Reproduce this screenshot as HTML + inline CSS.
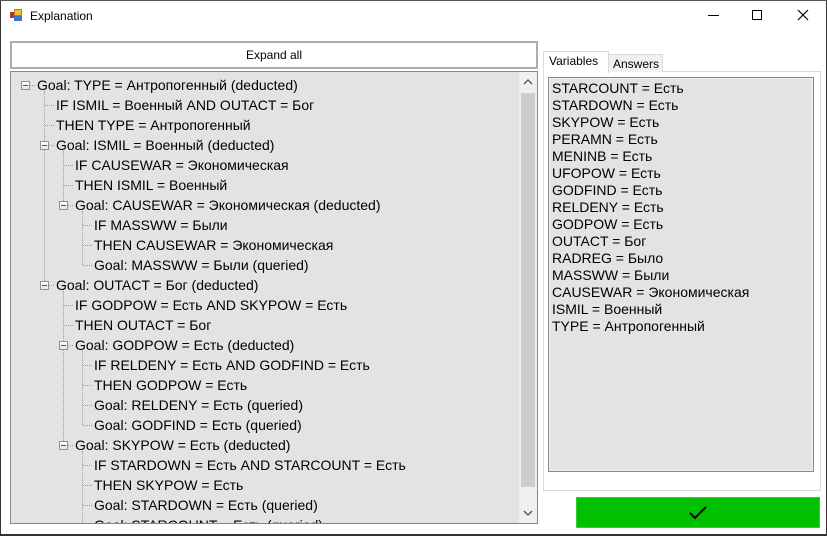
<!DOCTYPE html>
<html><head><meta charset="utf-8"><style>
*{margin:0;padding:0;box-sizing:border-box}
body{width:827px;height:536px;background:#fff;position:relative;overflow:hidden;font-family:"Liberation Sans",Arial,sans-serif;font-size:13px;color:#000}
.abs{position:absolute}
.t{position:absolute;white-space:nowrap;line-height:20px;height:20px}
.tr .t{font-size:14px}
.vl{position:absolute;width:1px;border-left:1px dotted #a0a0a0}
.hl{position:absolute;height:1px;border-top:1px dotted #a0a0a0}
.box{position:absolute;width:9px;height:9px;border:1px solid #919191;background:linear-gradient(#fff,#e6e6e6)}
.box:after{content:"";position:absolute;left:1px;top:3px;width:5px;height:1px;background:#3c50a0}
.lb{position:absolute;left:552px;white-space:nowrap;line-height:17px;font-size:14px}
</style></head><body>
<div class="abs" style="left:0;top:0;width:1px;height:536px;background:#333"></div>
<div class="abs" style="left:826px;top:0;width:1px;height:536px;background:#333"></div>
<div class="abs" style="left:0;top:534px;width:827px;height:2px;background:#333"></div>
<div class="abs" style="left:0;top:0;width:827px;height:1px;background:#555"></div>
<div class="abs" style="left:10px;top:9px;width:12px;height:12px">
<div class="abs" style="left:0;top:3px;width:5px;height:6px;background:#c03030"></div>
<div class="abs" style="left:4px;top:0;width:8px;height:7px;background:#f0c030;border:1px solid #b08020"></div>
<div class="abs" style="left:4px;top:7px;width:8px;height:5px;background:#4070d0"></div>
</div>
<div class="t" style="left:30px;top:6px;font-size:12px">Explanation</div>
<div class="abs" style="left:708px;top:15px;width:11px;height:1px;background:#000"></div>
<div class="abs" style="left:752px;top:10px;width:10px;height:10px;border:1px solid #000"></div>
<svg class="abs" style="left:797px;top:9px" width="12" height="12"><path d="M1 1L11 11M11 1L1 11" stroke="#000" stroke-width="1.2"/></svg>
<div class="abs" style="left:10px;top:41px;width:528px;height:28px;border:2px solid #adadad;background:#fff"></div>
<div class="t" style="left:10px;top:45px;width:528px;text-align:center;font-size:12px">Expand all</div>
<div class="abs tr" style="left:10px;top:71px;width:528px;height:453px;border:1px solid #828790;background:#e3e3e3;overflow:hidden">
<div class="abs" style="left:508px;top:0;width:18px;height:451px;background:#f0f0f0"></div>
<div class="abs" style="left:510px;top:21px;width:14px;height:394px;background:#cdcdcd"></div>
<svg class="abs" style="left:512px;top:6px" width="10" height="8"><path d="M1 6L5 2L9 6" fill="none" stroke="#606060" stroke-width="1.5"/></svg>
<svg class="abs" style="left:512px;top:437px" width="10" height="8"><path d="M1 2L5 6L9 2" fill="none" stroke="#606060" stroke-width="1.5"/></svg>
<div style="position:absolute;left:-10px;top:-71px">
<div class="vl" style="left:43px;top:90px;height:194px"></div>
<div class="vl" style="left:62px;top:150px;height:54px"></div>
<div class="vl" style="left:81px;top:210px;height:54px"></div>
<div class="vl" style="left:62px;top:290px;height:154px"></div>
<div class="vl" style="left:81px;top:350px;height:74px"></div>
<div class="vl" style="left:81px;top:450px;height:80px"></div>
<div class="hl" style="left:29px;top:84px;width:5px"></div>
<div class="hl" style="left:44px;top:104px;width:9px"></div>
<div class="hl" style="left:44px;top:124px;width:9px"></div>
<div class="hl" style="left:48px;top:144px;width:5px"></div>
<div class="hl" style="left:63px;top:164px;width:9px"></div>
<div class="hl" style="left:63px;top:184px;width:9px"></div>
<div class="hl" style="left:67px;top:204px;width:5px"></div>
<div class="hl" style="left:82px;top:224px;width:9px"></div>
<div class="hl" style="left:82px;top:244px;width:9px"></div>
<div class="hl" style="left:82px;top:264px;width:9px"></div>
<div class="hl" style="left:48px;top:284px;width:5px"></div>
<div class="hl" style="left:63px;top:304px;width:9px"></div>
<div class="hl" style="left:63px;top:324px;width:9px"></div>
<div class="hl" style="left:67px;top:344px;width:5px"></div>
<div class="hl" style="left:82px;top:364px;width:9px"></div>
<div class="hl" style="left:82px;top:384px;width:9px"></div>
<div class="hl" style="left:82px;top:404px;width:9px"></div>
<div class="hl" style="left:82px;top:424px;width:9px"></div>
<div class="hl" style="left:67px;top:444px;width:5px"></div>
<div class="hl" style="left:82px;top:464px;width:9px"></div>
<div class="hl" style="left:82px;top:484px;width:9px"></div>
<div class="hl" style="left:82px;top:504px;width:9px"></div>
<div class="hl" style="left:82px;top:524px;width:9px"></div>
<div class="box" style="left:20px;top:80px"></div>
<div class="box" style="left:39px;top:140px"></div>
<div class="box" style="left:58px;top:200px"></div>
<div class="box" style="left:39px;top:280px"></div>
<div class="box" style="left:58px;top:340px"></div>
<div class="box" style="left:58px;top:440px"></div>
<div class="t" style="left:36px;top:74px">Goal: TYPE = Антропогенный (deducted)</div>
<div class="t" style="left:55px;top:94px">IF ISMIL = Военный AND OUTACT = Бог</div>
<div class="t" style="left:55px;top:114px">THEN TYPE = Антропогенный</div>
<div class="t" style="left:55px;top:134px">Goal: ISMIL = Военный (deducted)</div>
<div class="t" style="left:74px;top:154px">IF CAUSEWAR = Экономическая</div>
<div class="t" style="left:74px;top:174px">THEN ISMIL = Военный</div>
<div class="t" style="left:74px;top:194px">Goal: CAUSEWAR = Экономическая (deducted)</div>
<div class="t" style="left:93px;top:214px">IF MASSWW = Были</div>
<div class="t" style="left:93px;top:234px">THEN CAUSEWAR = Экономическая</div>
<div class="t" style="left:93px;top:254px">Goal: MASSWW = Были (queried)</div>
<div class="t" style="left:55px;top:274px">Goal: OUTACT = Бог (deducted)</div>
<div class="t" style="left:74px;top:294px">IF GODPOW = Есть AND SKYPOW = Есть</div>
<div class="t" style="left:74px;top:314px">THEN OUTACT = Бог</div>
<div class="t" style="left:74px;top:334px">Goal: GODPOW = Есть (deducted)</div>
<div class="t" style="left:93px;top:354px">IF RELDENY = Есть AND GODFIND = Есть</div>
<div class="t" style="left:93px;top:374px">THEN GODPOW = Есть</div>
<div class="t" style="left:93px;top:394px">Goal: RELDENY = Есть (queried)</div>
<div class="t" style="left:93px;top:414px">Goal: GODFIND = Есть (queried)</div>
<div class="t" style="left:74px;top:434px">Goal: SKYPOW = Есть (deducted)</div>
<div class="t" style="left:93px;top:454px">IF STARDOWN = Есть AND STARCOUNT = Есть</div>
<div class="t" style="left:93px;top:474px">THEN SKYPOW = Есть</div>
<div class="t" style="left:93px;top:494px">Goal: STARDOWN = Есть (queried)</div>
<div class="t" style="left:93px;top:514px">Goal: STARCOUNT = Есть (queried)</div>
</div>
</div>
<div class="abs" style="left:543px;top:71px;width:278px;height:420px;border:1px solid #dadada;background:#fff"></div>
<div class="abs" style="left:608px;top:54px;width:55px;height:18px;border:1px solid #d9d9d9;border-bottom:none;background:#f0f0f0"></div>
<div class="t" style="left:613px;top:54px;font-size:12px">Answers</div>
<div class="abs" style="left:543px;top:51px;width:66px;height:22px;border:1px solid #dadada;border-bottom:none;background:#fff"></div>
<div class="t" style="left:549px;top:51px;font-size:12px">Variables</div>
<div class="abs" style="left:548px;top:77px;width:266px;height:395px;border:1px solid #828790;background:#e3e3e3;box-shadow:inset 0 0 0 1px #f0f0f0"></div>
<div class="lb" style="top:80px">STARCOUNT = Есть</div>
<div class="lb" style="top:97px">STARDOWN = Есть</div>
<div class="lb" style="top:114px">SKYPOW = Есть</div>
<div class="lb" style="top:131px">PERAMN = Есть</div>
<div class="lb" style="top:148px">MENINB = Есть</div>
<div class="lb" style="top:165px">UFOPOW = Есть</div>
<div class="lb" style="top:182px">GODFIND = Есть</div>
<div class="lb" style="top:199px">RELDENY = Есть</div>
<div class="lb" style="top:216px">GODPOW = Есть</div>
<div class="lb" style="top:233px">OUTACT = Бог</div>
<div class="lb" style="top:250px">RADREG = Было</div>
<div class="lb" style="top:267px">MASSWW = Были</div>
<div class="lb" style="top:284px">CAUSEWAR = Экономическая</div>
<div class="lb" style="top:301px">ISMIL = Военный</div>
<div class="lb" style="top:318px">TYPE = Антропогенный</div>
<div class="abs" style="left:576px;top:497px;width:244px;height:31px;background:#00c000;border:1px solid #30d030"></div>
<svg class="abs" style="left:689px;top:506px" width="19" height="14"><path d="M1 7L6 12L17 1" fill="none" stroke="#000" stroke-width="2"/></svg>
</body></html>
